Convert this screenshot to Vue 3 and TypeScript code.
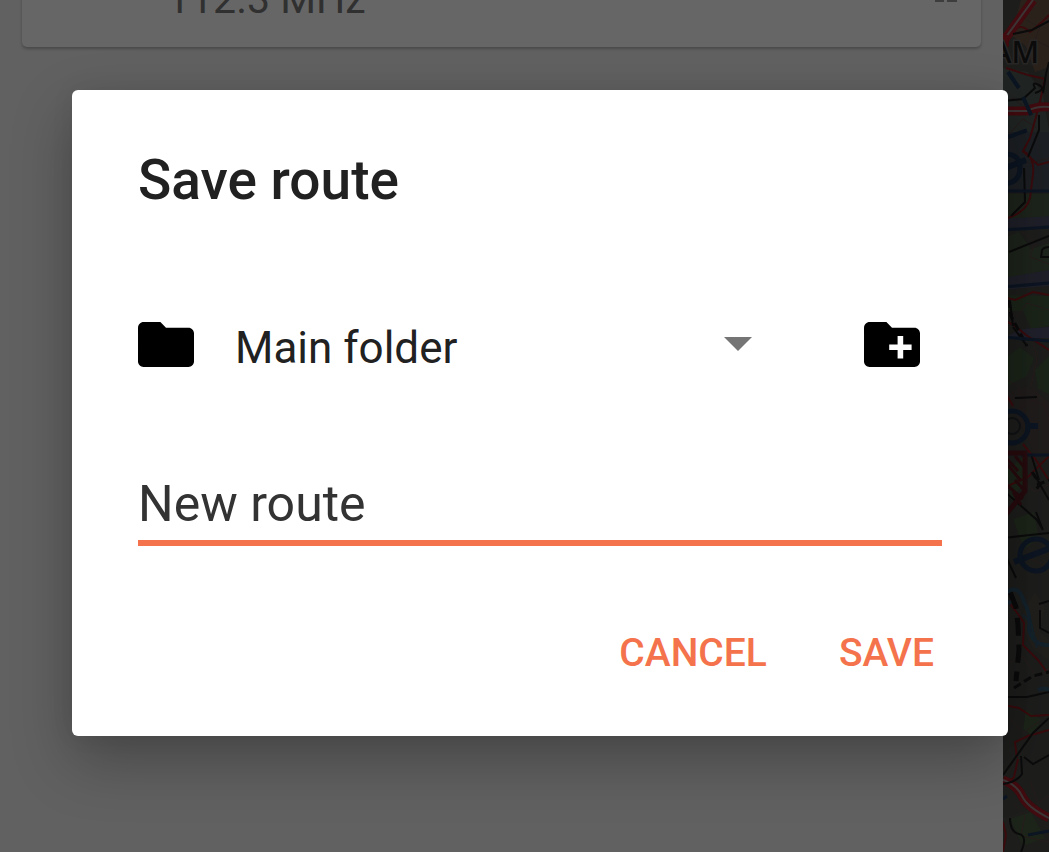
<script setup lang="ts">
import { ref } from 'vue'

const folders = ['Main folder']
const folder = ref<string>(folders[0])
const routeName = ref<string>('New route')
const folderPath = 'M10 4H4c-1.1 0-1.99.9-1.99 2L2 18c0 1.1.9 2 2 2h16c1.1 0 2-.9 2-2V8c0-1.1-.9-2-2-2h-8l-2-2z'
</script>

<template>
  <div class="screen">
    <main class="panel">
      <section class="card">
        <span class="frequency">112.3 MHz</span>
        <svg class="handle" viewBox="0 0 24 24" aria-hidden="true">
          <path d="M1 2h9v9H1zM13 2h10v9H13zM1 15h9v9H1zM13 15h10v9H13z" />
        </svg>
      </section>
    </main>

    <aside class="map" aria-label="Map">
      <svg viewBox="0 0 46 852" preserveAspectRatio="xMinYMin slice">
        <rect width="46" height="852" fill="#1d1d1c" />
        <path d="M18 0H46V67L32 72L23 46L8 35Z" fill="#2b211b" />
        <path d="M0 68L25 72L40 95L46 130V180H0Z" fill="#202423" />
        <path d="M0 132H46V192H0Z" fill="#1c1f23" />
        <path d="M0 194H46V220H0ZM0 238L16 232L28 249L46 243V276L0 283Z" fill="#1d241b" />
        <path d="M0 219L46 216V229H0ZM0 278L46 270V286L0 290Z" fill="#1e1f28" />
        <path d="M0 295L46 296V326L28 329L20 311H0ZM0 360L17 347L31 358L24 376L0 388ZM32 370L46 356V394L35 389Z" fill="#1b2419" />
        <path d="M20 329L46 327V338H0Z" fill="#1f202b" />
        <path d="M0 394L24 386L46 402V455H31L18 425Z" fill="#201c1c" />
        <path d="M4 470L20 457V485L8 500ZM10 519L31 512L36 539L21 549ZM23 710L38 719L31 737L20 729ZM7 819L28 812L42 838L20 846Z" fill="#1c2419" />
        <path d="M21 610L32 592L42 607L37 632L46 640V660L31 650L22 632Z" fill="#201f1c" />

        <g fill="none" stroke="#261c1b" stroke-width="1">
          <path d="M23 20L37 27L32 40L46 47M0 104L10 98L23 109L46 105M6 134L20 119L34 128M12 160L28 163L46 158M20 232L32 242L27 257L46 264M0 308L15 316L24 303L46 310M30 340L34 360L28 386L40 400L46 420M0 378L15 386L17 398M13 411L28 400L46 407M20 480L32 492L46 484M0 566L22 557L46 567M5 663L20 656L34 678L46 668M6 718L20 733L42 717M27 781L35 803L46 796M10 803L22 816L18 836L46 842" />
        </g>

        <g fill="none" stroke="#390b0d" stroke-width="2">
          <path d="M3 68L25 75L42 79L36 106L27 138L20 151Q32 157 30 174L27 198Q23 212 5 218L0 220" />
          <path d="M8 32Q17 22 27 32Q39 23 46 15M20 151L35 165L46 162M0 297L12 300L30 292L46 295M0 319L12 326L23 335L46 350M0 389L10 406M20 444L33 460L45 479M0 488L25 477L46 456M5 601L15 614L21 623L20 645L35 660L43 671M0 705L16 708L28 716L46 715M14 758L12 742L25 736L46 730M15 759L11 777L4 784M0 822L3 835L0 852" />
        </g>
        <g fill="none">
          <path d="M0 42L30 0M0 111L24 111Q34 106 46 107M0 780Q14 785 19 796T46 818" stroke="#410b0f" stroke-width="9" />
          <path d="M0 41L30 0M0 111L24 111Q34 106 46 107M0 780Q14 785 19 796T46 818" stroke="#3c3434" stroke-width="2" />
        </g>
        <path d="M0 34L5 35L6 46L0 50Z" fill="#410b0f" />

        <g fill="none" stroke="#0b0b0c" stroke-width="2">
          <path d="M10 34L29 30L46 21M46 62L43 74L40 93M0 101L20 99L32 88Q28 81 36 85T32 93M36 115V130L25 157M21 168L22 202L8 216M6 252L46 236M7 301L10 326M10 327L24 346M12 398L34 397M0 490L34 520L40 530L33 512M31 474L46 500M28 454L36 480M0 538L46 533M0 550L13 578M36 604L46 601M37 610V628L46 633M0 697L24 697L46 692M0 775L30 733L46 718M18 756L19 774Q14 782 0 784M21 757L30 764L46 755M7 818Q7 832 16 834T18 852" />
          <path d="M7 592L13 607L15 625L16 650L13 681" stroke-width="5" stroke-dasharray="18 9" />
          <path d="M11 688L30 676L46 672M29 472L37 484L32 491M34 485L46 480M6 300L8 316L24 346" stroke-width="3" stroke-dasharray="8 4" />
          <path d="M38 258L39 250Q41 247 46 247M38 257H46" stroke-width="2" />
        </g>

        <g fill="none" stroke="#0c1522" stroke-width="4">
          <path d="M5 72L16 88M20 97L29 117M5 137L28 129" stroke-dasharray="20 8" />
          <path d="M0 154Q17 153 17 168T0 184" stroke-width="5" />
          <path d="M0 169L23 160" stroke-width="6" />
          <path d="M0 191H46M0 230L46 227M0 287L46 283M0 337L46 341M18 455H46M0 799L4 796M25 835L46 831" stroke-width="3" />
          <circle cx="9" cy="427" r="16" stroke-width="5" />
          <circle cx="9" cy="426" r="8" stroke="#101214" stroke-width="2" />
          <path d="M26 426H35M11 562L45 549" stroke-width="6" />
          <circle cx="33" cy="555" r="16" stroke-width="5" />
        </g>
        <g fill="none" stroke="#14222b" stroke-width="4">
          <path d="M4 592Q16 584 21 602Q28 614 26 629Q30 646 46 645M0 601L8 603M35 690Q40 687 46 690" />
          <path d="M20 615L28 622L34 648" stroke-width="2" />
        </g>
        <g fill="none" stroke="#260b0e">
          <path d="M0 453H22V491L0 518" stroke-width="5" />
          <path d="M5 465L18 481M12 456L22 468M5 486L20 499M15 471L4 459M12 480L22 491M10 492L18 505" stroke-width="3" />
        </g>
        <text x="36" y="63" text-anchor="end" class="place">AM</text>
      </svg>
    </aside>

    <div class="overlay">
      <form class="dialog" role="dialog" aria-labelledby="dialog-title" @submit.prevent>
        <h1 id="dialog-title">Save route</h1>
        <div class="folder-row">
          <svg class="folder-icon" viewBox="2 4 20 16" aria-hidden="true"><path :d="folderPath" /></svg>
          <div class="picker">
            <select v-model="folder" aria-label="Folder">
              <option v-for="name in folders" :key="name" :value="name">{{ name }}</option>
            </select>
            <svg class="arrow" viewBox="0 0 28 14" aria-hidden="true"><path d="M0 0H28L14 14Z" /></svg>
          </div>
          <button class="add" type="button" aria-label="New folder">
            <svg class="folder-icon" viewBox="2 4 20 16" aria-hidden="true">
              <path :d="folderPath" />
              <path d="M14 9h2v3h3v2h-3v3h-2v-3h-3v-2h3z" fill="#fff" />
            </svg>
          </button>
        </div>
        <input v-model="routeName" class="name" type="text" aria-label="Route name" />
        <div class="actions">
          <button type="button">CANCEL</button>
          <button type="submit">SAVE</button>
        </div>
      </form>
    </div>
  </div>
</template>

<style>
body {
  background: #616161;
}
</style>

<style scoped>
.screen {
  position: relative;
  display: flex;
  min-height: 100vh;
  overflow: hidden;
  font-family: Roboto, "Liberation Sans", sans-serif;
}
.panel {
  flex: 1;
  padding: 0 22px;
  background: #616161;
}
.card {
  display: flex;
  align-items: flex-start;
  justify-content: space-between;
  margin-top: -25px;
  padding: 0 23px 24px 145px;
  border-radius: 5px;
  background: #666;
  box-shadow: 0 2px 3px rgba(0, 0, 0, 0.25);
}
.frequency {
  color: #303030;
  font-size: 41px;
  line-height: 48px;
}
.handle {
  width: 24px;
  height: 24px;
  margin-top: 3px;
  fill: #3d3d3d;
}
.map {
  position: relative;
  flex: 0 0 46px;
  overflow: hidden;
  background: #1d1d1c;
}
.map svg {
  position: absolute;
  width: 100%;
  height: 100%;
}
.place {
  fill: #0b0b0b;
  stroke: #292726;
  stroke-width: 3px;
  paint-order: stroke;
  font-family: "Noto Sans", sans-serif;
  font-size: 30px;
  font-weight: 500;
}
.overlay {
  position: absolute;
  inset: 0;
  padding: 90px 41px 0 72px;
}
.dialog {
  display: flex;
  flex-direction: column;
  padding: 58px 66px 59px;
  border-radius: 6px;
  background: #fff;
  box-shadow: 0 24px 60px rgba(0, 0, 0, 0.28), 0 0 24px rgba(0, 0, 0, 0.06);
}
h1 {
  margin: 0 0 104px;
  color: #212121;
  font-size: 55px;
  font-weight: 500;
  line-height: 64px;
}
.folder-row {
  display: flex;
  align-items: center;
  height: 56px;
  padding-right: 22px;
}
.folder-icon {
  display: block;
  flex: none;
  width: 56px;
  height: 45px;
}
.picker {
  display: flex;
  flex: 1;
  align-items: center;
  position: relative;
  margin: 0 112px 0 41px;
}
select {
  appearance: none;
  width: 100%;
  height: 56px;
  padding: 6px 40px 0 0;
  border: 0;
  outline: 0;
  background: transparent;
  color: #212121;
  font-family: inherit;
  font-size: 44px;
}
.arrow {
  position: absolute;
  right: 0;
  width: 28px;
  height: 14px;
  fill: #757575;
  pointer-events: none;
}
button {
  border: 0;
  background: transparent;
  font-family: inherit;
  cursor: pointer;
}
.add {
  padding: 0;
}
.name {
  box-sizing: border-box;
  width: 100%;
  height: 74px;
  margin: 100px 0 83px;
  padding: 0 0 4px;
  border: 0;
  border-bottom: 6px solid #f4734c;
  border-radius: 0;
  outline: 0;
  background: transparent;
  color: #333;
  font-family: inherit;
  font-size: 50px;
}
.actions {
  display: flex;
  justify-content: flex-end;
  gap: 56px;
}
.actions button {
  padding: 0 8px;
  color: #f4734c;
  font-size: 39px;
  font-weight: 500;
  line-height: 48px;
}
</style>
